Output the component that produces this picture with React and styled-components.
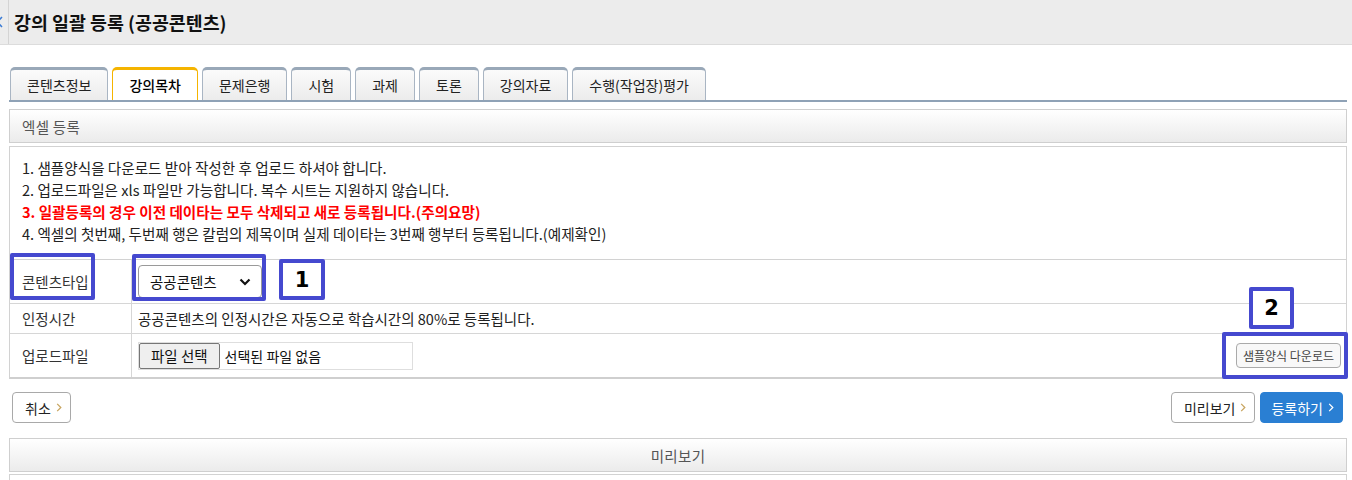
import React from "react";
import styled, { createGlobalStyle } from "styled-components";

const KR = `"Noto Sans CJK KR", "Noto Sans", sans-serif`;

const GlobalStyle = createGlobalStyle`
  html, body { margin: 0; padding: 0; background: #fff; }
  body { font-family: ${KR}; color: #222; }
  * { box-sizing: border-box; }
`;

const Page = styled.div`
  position: relative;
  width: 1352px;
  height: 480px;
  overflow: hidden;
`;

//! Header
const Header = styled.header`
  height: 45px;
  background: #ececec;
  border-bottom: 1px solid #dcdcdc;
  display: flex;
  align-items: stretch;
`;

const Edge = styled.div`
  width: 9px;
  border-right: 1px solid #d4d4d4;
  overflow: hidden;
  display: flex;
  align-items: center;
  svg { margin-left: -4px; }
`;

const Title = styled.h1`
  margin: 0;
  padding-left: 5px;
  font-size: 18.4px;
  font-weight: 700;
  color: #111;
  display: flex;
  align-items: center;
`;

const Content = styled.div`
  padding: 0 5px 0 9px;
`;

//! Tabs
const TabList = styled.div`
  margin-top: 22px;
  padding-left: 1px;
  display: flex;
  gap: 4px;
  border-bottom: 2px solid #8fa2b6;
`;

const Tab = styled.div`
  height: 33px;
  padding: 0 16px;
  display: flex;
  align-items: center;
  justify-content: center;
  font-size: 14px;
  color: ${(p) => (p.$active ? "#000" : "#222")};
  font-weight: ${(p) => (p.$active ? 500 : 400)};
  background: ${(p) =>
    p.$active ? "#fff" : "linear-gradient(#fbfbfb, #ececec)"};
  border: 1px solid ${(p) => (p.$active ? "#f5b400" : "#a9b5c3")};
  border-top: 3px solid ${(p) => (p.$active ? "#f5b400" : "#99a8b8")};
  border-bottom: none;
  border-radius: 5px 5px 0 0;
`;

//! Panels
const Bar = styled.div`
  margin-top: ${(p) => p.$mt || 0}px;
  height: 34px;
  border: 1px solid #cfcfcf;
  background: linear-gradient(#ffffff, #ebebeb);
  display: flex;
  align-items: center;
  justify-content: ${(p) => (p.$center ? "center" : "flex-start")};
  padding-left: ${(p) => (p.$center ? 0 : 12)}px;
  font-size: 14.5px;
  letter-spacing: 0.3px;
  color: #555;
`;

const Notice = styled.div`
  margin-top: 3px;
  border: 1px solid #d2d2d2;
  border-bottom: none;
  padding: 10px 12px 14px;
`;

const NoticeLine = styled.p`
  margin: 0;
  line-height: 22px;
  font-size: 14.6px;
  color: ${(p) => (p.$warn ? "#f00" : "#222")};
  font-weight: ${(p) => (p.$warn ? 700 : 400)};
`;

const Table = styled.div`
  border: 1px solid #d2d2d2;
  border-bottom: 2px solid #cfcfcf;
`;

const Row = styled.div`
  display: grid;
  grid-template-columns: 122px 1fr;
  height: ${(p) => p.$h}px;
  & + & { border-top: 1px solid #d6d6d6; }
`;

const Label = styled.div`
  display: flex;
  align-items: center;
  padding-left: 12px;
  border-right: 1px solid #d6d6d6;
  font-size: 14.5px;
  color: #333;
`;

const Value = styled.div`
  display: flex;
  align-items: center;
  padding-left: 6px;
  padding-right: 5px;
  font-size: 14.5px;
  color: #222;
`;

const Select = styled.div`
  width: 124px;
  height: 33px;
  border: 1px solid #9a9a9a;
  border-radius: 4px;
  display: flex;
  align-items: center;
  justify-content: space-between;
  padding: 0 10px 0 11px;
  font-size: 14.5px;
  color: #111;
`;

const FileBox = styled.div`
  width: 275px;
  height: 28px;
  border: 1px solid #dedede;
  display: flex;
  align-items: center;
  gap: 5px;
  font-size: 14px;
  color: #111;
`;

const FileButton = styled.span`
  height: 26px;
  padding: 0 11px;
  display: flex;
  align-items: center;
  background: #efefef;
  border: 1px solid #767676;
  border-radius: 2px;
  font-size: 14.5px;
`;

const SmallButton = styled.div`
  margin-left: auto;
  height: 25px;
  padding: 0 6px;
  display: flex;
  align-items: center;
  border: 1px solid #aaa;
  border-radius: 4px;
  background: #f8f8f8;
  font-size: 12px;
  color: #444;
`;

//! Action buttons
const Actions = styled.div`
  margin-top: 13px;
  padding: 0 4px 0 3px;
  display: flex;
  align-items: center;
  gap: 5px;
`;

const Spacer = styled.div`
  flex: 1;
`;

const Button = styled.div`
  height: 31px;
  padding: 0 8px 0 ${(p) => (p.$primary ? 10 : 12)}px;
  display: flex;
  align-items: center;
  gap: 5px;
  border-radius: 4px;
  border: 1px solid ${(p) => (p.$primary ? "#2a7fd3" : "#a9a9a9")};
  background: ${(p) => (p.$primary ? "#2a7fd3" : "#fff")};
  color: ${(p) => (p.$primary ? "#fff" : "#222")};
  font-size: 14px;
`;

const PreviewBody = styled.div`
  margin-top: 2px;
  height: 40px;
  border: 1px solid #d2d2d2;
`;

//! Annotations drawn over the screenshot
const Mark = styled.div`
  position: absolute;
  left: ${(p) => p.$x}px;
  top: ${(p) => p.$y}px;
  width: ${(p) => p.$w}px;
  height: ${(p) => p.$h}px;
  border: 4px solid #4549cf;
  border-radius: 2px;
  display: flex;
  align-items: center;
  justify-content: center;
  font-family: "DejaVu Sans", sans-serif;
  font-weight: 700;
  font-size: 21px;
  color: #000;
  background: ${(p) => (p.$fill ? "#fff" : "transparent")};
`;

const Chevron = ({ color = "#c8a560", size = 9 }) => (
  <svg width="6" height={size} viewBox="0 0 6 10">
    <polyline points="1,1 5,5 1,9" fill="none" stroke={color} strokeWidth="1.4" />
  </svg>
);

const Caret = () => (
  <svg width="12" height="8" viewBox="0 0 12 8">
    <polyline points="1.5,1.5 6,6 10.5,1.5" fill="none" stroke="#111" strokeWidth="2.2" />
  </svg>
);

const BackArrow = () => (
  <svg width="8" height="12" viewBox="0 0 8 12">
    <polyline points="6,1 1.5,6 6,11" fill="none" stroke="#3a7bd5" strokeWidth="1.5" />
  </svg>
);

const tabs = ["콘텐츠정보", "강의목차", "문제은행", "시험", "과제", "토론", "강의자료", "수행(작업장)평가"];

const notices = [
  { text: "1. 샘플양식을 다운로드 받아 작성한 후 업로드 하셔야 합니다." },
  { text: "2. 업로드파일은 xls 파일만 가능합니다. 복수 시트는 지원하지 않습니다." },
  { text: "3. 일괄등록의 경우 이전 데이타는 모두 삭제되고 새로 등록됩니다.(주의요망)", warn: true },
  { text: "4. 엑셀의 첫번째, 두번째 행은 칼럼의 제목이며 실제 데이타는 3번째 행부터 등록됩니다.(예제확인)" },
];

export default function App() {
  return (
    <Page>
      <GlobalStyle />
      <Header>
        <Edge><BackArrow /></Edge>
        <Title>강의 일괄 등록 (공공콘텐츠)</Title>
      </Header>

      <Content>
        <TabList>
          {tabs.map((t) => (
            <Tab key={t} $active={t === "강의목차"}>{t}</Tab>
          ))}
        </TabList>

        <Bar $mt={7}>엑셀 등록</Bar>

        <Notice>
          {notices.map((n) => (
            <NoticeLine key={n.text} $warn={n.warn}>{n.text}</NoticeLine>
          ))}
        </Notice>

        <Table>
          <Row $h={43}>
            <Label>콘텐츠타입</Label>
            <Value>
              <Select>
                <span>공공콘텐츠</span>
                <Caret />
              </Select>
            </Value>
          </Row>
          <Row $h={30}>
            <Label>인정시간</Label>
            <Value>공공콘텐츠의 인정시간은 자동으로 학습시간의 80%로 등록됩니다.</Value>
          </Row>
          <Row $h={44}>
            <Label>업로드파일</Label>
            <Value>
              <FileBox>
                <FileButton>파일 선택</FileButton>
                <span>선택된 파일 없음</span>
              </FileBox>
              <SmallButton>샘플양식 다운로드</SmallButton>
            </Value>
          </Row>
        </Table>

        <Actions>
          <Button>취소 <Chevron /></Button>
          <Spacer />
          <Button>미리보기 <Chevron /></Button>
          <Button $primary>등록하기 <Chevron color="#fff" /></Button>
        </Actions>

        <Bar $mt={15} $center>미리보기</Bar>
        <PreviewBody />
      </Content>

      <Mark $x={10} $y={253} $w={85} $h={47} />
      <Mark $x={132} $y={254} $w={134} $h={47} />
      <Mark $x={279} $y={259} $w={46} $h={41} $fill>1</Mark>
      <Mark $x={1249} $y={287} $w={45} $h={42} $fill>2</Mark>
      <Mark $x={1222} $y={332} $w={126} $h={47} />
    </Page>
  );
}
